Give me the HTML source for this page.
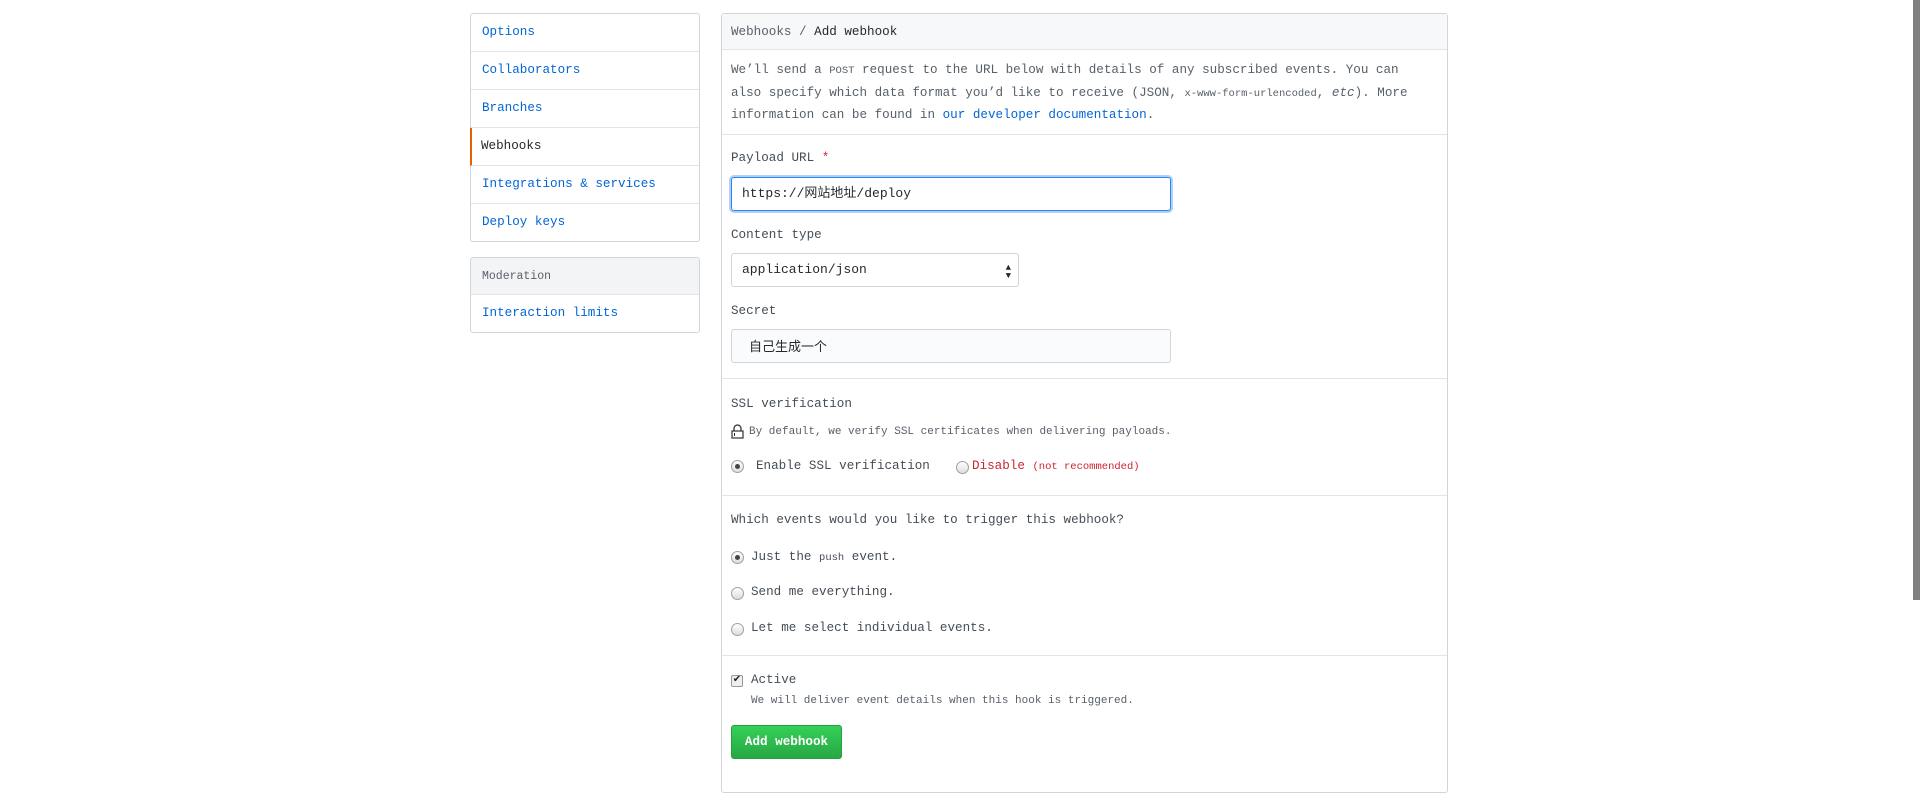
<!DOCTYPE html>
<html><head><meta charset="utf-8"><style>
*{margin:0;padding:0;box-sizing:border-box}
body{width:1920px;height:766px;overflow:hidden;background:#fff;position:relative;font-family:"Liberation Mono","Noto Sans CJK SC",monospace;font-size:12.6px;color:#24292e}
.a{position:absolute;white-space:nowrap}
.box{position:absolute;border:1px solid #d1d5da;border-radius:3px;background:#fff}
.item{position:absolute;left:0;right:0;height:38px;line-height:37px;padding-left:11px;color:#0366d6;border-bottom:1px solid #e1e4e8}
.g{color:#586069}
.lab{color:#444d56}
.inp{position:absolute;border:1px solid #d1d5da;border-radius:3px;background:#fafbfc;padding-left:10px;line-height:32px;font-size:13px}
.radio{position:absolute;width:13px;height:13px;border-radius:50%;border:1px solid #a0a0a0;background:linear-gradient(#fff,#ddd)}
.radio.on::after{content:"";position:absolute;left:3px;top:3px;width:5px;height:5px;border-radius:50%;background:#444}
.sep{position:absolute;left:721px;width:726px;height:1px;background:#e1e4e8}
small{font-size:10.5px}
</style></head><body>
<div style="position:absolute;left:1913px;top:0;width:7px;height:600px;background:#808080"></div>

<div class="box" style="left:470px;top:13px;width:230px;height:229px">
<div class="item" style="top:0">Options</div>
<div class="item" style="top:38px">Collaborators</div>
<div class="item" style="top:76px">Branches</div>
<div class="item" style="top:114px;color:#24292e;border-left:2px solid #e36209;padding-left:9px;left:-1px">Webhooks</div>
<div class="item" style="top:152px">Integrations &amp; services</div>
<div class="item" style="top:190px;border-bottom:none">Deploy keys</div>
</div>

<div class="box" style="left:470px;top:257px;width:230px;height:76px">
<div class="item g" style="top:0;background:#f3f4f6;font-size:11.5px;color:#586069;height:37px;border-radius:3px 3px 0 0">Moderation</div>
<div class="item" style="top:37px;border-bottom:none">Interaction limits</div>
</div>

<div class="box" style="left:721px;top:13px;width:727px;height:780px"></div>
<div class="a" style="left:722px;top:14px;width:725px;height:36px;background:#f6f8fa;border-bottom:1px solid #e1e4e8"></div>
<div class="a" style="left:731px;top:22px;line-height:20px"><span class="g">Webhooks /</span> Add webhook</div>

<div class="a g" style="left:731px;top:60px;line-height:21.5px">We’ll send a <small>POST</small> request to the URL below with details of any subscribed events. You can<br>also specify which data format you’d like to receive (JSON, <small>x-www-form-urlencoded</small>, <i>etc</i>). More<br>information can be found in <span style="color:#0366d6">our developer documentation</span>.</div>
<div class="sep" style="top:134px"></div>

<div class="a lab" style="left:731px;top:151px">Payload URL <span style="color:#cb2431">*</span></div>
<div class="inp" style="left:731px;top:177px;width:440px;height:34px;background:#fff;border-color:#2188ff;box-shadow:0 0 0 2px rgba(3,102,214,.3)">https://网站地址/deploy</div>

<div class="a lab" style="left:731px;top:228px">Content type</div>
<div class="inp" style="left:731px;top:253px;width:288px;height:34px;background:#fff">application/json<span style="position:absolute;right:7px;top:0;font-size:9px;line-height:8px;top:10px">▲<br>▼</span></div>

<div class="a lab" style="left:731px;top:304px">Secret</div>
<div class="inp" style="left:731px;top:329px;width:440px;height:34px;padding-left:17px;font-family:'Noto Sans CJK SC',sans-serif">自己生成一个</div>
<div class="sep" style="top:378px"></div>

<div class="a lab" style="left:731px;top:397px">SSL verification</div>
<svg class="a" style="left:731px;top:424px" width="13" height="15" viewBox="0 0 13 15"><path d="M3 7V4.5a3.5 3.5 0 0 1 7 0V7" fill="none" stroke="#333" stroke-width="1.3"/><rect x="1" y="7" width="11" height="7" fill="none" stroke="#333" stroke-width="1.2"/><rect x="3" y="9" width="1" height="3" fill="#333"/></svg>
<div class="a g" style="left:749px;top:426px;font-size:11px">By default, we verify SSL certificates when delivering payloads.</div>
<div class="radio on" style="left:731px;top:460px"></div>
<div class="a lab" style="left:756px;top:459px">Enable SSL verification</div>
<div class="radio" style="left:956px;top:461px"></div>
<div class="a" style="left:972px;top:459px;color:#cb2431">Disable <small>(not recommended)</small></div>
<div class="sep" style="top:495px"></div>

<div class="a lab" style="left:731px;top:513px">Which events would you like to trigger this webhook?</div>
<div class="radio on" style="left:731px;top:551px"></div>
<div class="a lab" style="left:751px;top:550px">Just the <small>push</small> event.</div>
<div class="radio" style="left:731px;top:587px"></div>
<div class="a lab" style="left:751px;top:585px">Send me everything.</div>
<div class="radio" style="left:731px;top:623px"></div>
<div class="a lab" style="left:751px;top:621px">Let me select individual events.</div>
<div class="sep" style="top:655px"></div>

<div class="a" style="left:731px;top:675px;width:12px;height:12px;border:1px solid #999;border-radius:2px;background:#eee;font-size:10px;line-height:10px;text-align:center">✔</div>
<div class="a lab" style="left:751px;top:673px">Active</div>
<div class="a g" style="left:751px;top:695px;font-size:11px">We will deliver event details when this hook is triggered.</div>
<div class="a" style="left:731px;top:725px;width:111px;height:34px;border-radius:3px;background:linear-gradient(#34d058,#28a745);border:1px solid #23a03f;color:#fff;line-height:32px;text-align:center;font-weight:bold;font-size:12.6px">Add webhook</div>
</body></html>
